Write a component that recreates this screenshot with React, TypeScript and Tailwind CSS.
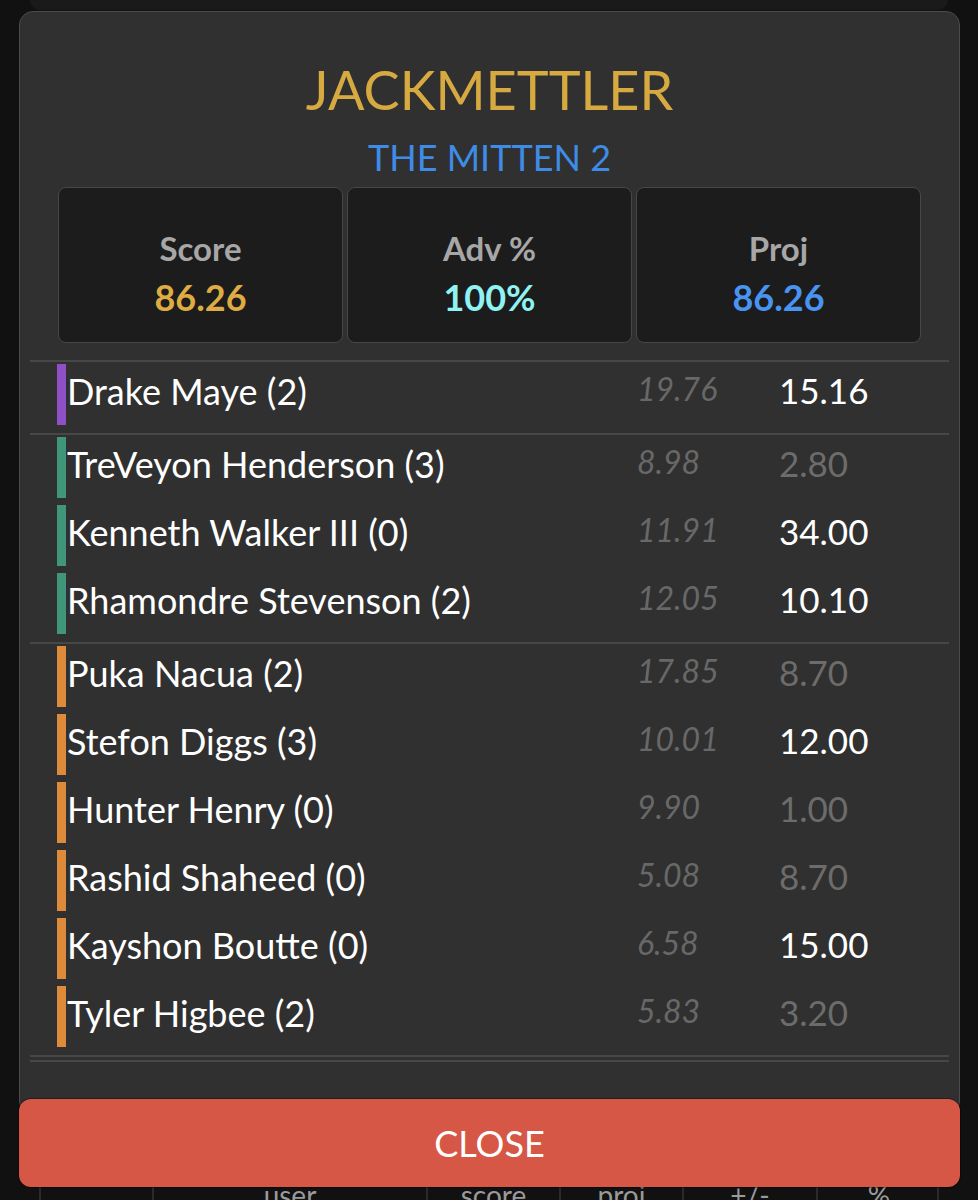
import type { ReactNode } from 'react';

type Player = { name: string; proj: string; score: string; live: boolean };
type Group = { color: string; players: Player[] };

const groups: Group[] = [
  {
    color: 'bg-[#8f4fc6]',
    players: [{ name: 'Drake Maye (2)', proj: '19.76', score: '15.16', live: true }],
  },
  {
    color: 'bg-[#3f967a]',
    players: [
      { name: 'TreVeyon Henderson (3)', proj: '8.98', score: '2.80', live: false },
      { name: 'Kenneth Walker III (0)', proj: '11.91', score: '34.00', live: true },
      { name: 'Rhamondre Stevenson (2)', proj: '12.05', score: '10.10', live: true },
    ],
  },
  {
    color: 'bg-[#de8a3b]',
    players: [
      { name: 'Puka Nacua (2)', proj: '17.85', score: '8.70', live: false },
      { name: 'Stefon Diggs (3)', proj: '10.01', score: '12.00', live: true },
      { name: 'Hunter Henry (0)', proj: '9.90', score: '1.00', live: false },
      { name: 'Rashid Shaheed (0)', proj: '5.08', score: '8.70', live: false },
      { name: 'Kayshon Boutte (0)', proj: '6.58', score: '15.00', live: true },
      { name: 'Tyler Higbee (2)', proj: '5.83', score: '3.20', live: false },
    ],
  },
];

function App() {
  return (
    <div className="relative h-[1200px] overflow-hidden bg-[#111111] font-[Lato,sans-serif]">
      {/* page behind the modal */}
      <div className="mx-[30px] h-[10px] rounded-b-[14px] bg-[#1a1a1a]" />
      <div className="h-[1171px]" />
      <div className="mx-[39px] grid h-[40px] grid-cols-[113px_274px_133px_123px_134px_122px] border-x-2 border-[#2a2a2a] text-[28px] leading-none text-[#9a9a9a]">
        <HeadCell />
        <HeadCell>user</HeadCell>
        <HeadCell>score</HeadCell>
        <HeadCell>proj</HeadCell>
        <HeadCell>+/-</HeadCell>
        <HeadCell last>%</HeadCell>
      </div>

      {/* modal */}
      <div className="absolute left-[19px] top-[11px] z-10 w-[941px]">
        <div className="rounded-[14px] border border-[#4b4b4b] bg-[#303030] px-[10px] pb-[52px] pt-[51px]">
          <h1 className="text-center text-[54px] leading-none text-[#d7a941]">JACKMETTLER</h1>
          <h2 className="mt-[22px] text-center text-[36px] leading-none text-[#3e8ce6]">THE MITTEN 2</h2>

          <div className="mt-[12px] grid grid-cols-3 gap-[4px] px-[28px]">
            <StatCard label="Score" value="86.26" valueColor="text-[#dfac44]" />
            <StatCard label="Adv %" value="100%" valueColor="text-[#90f2f2]" />
            <StatCard label="Proj" value="86.26" valueColor="text-[#4894f0]" />
          </div>

          <div className="mt-[17px] h-[2px] bg-[#474747]" />
          {groups.map((group, gi) => (
            <div key={gi}>
              <div className="flex flex-col gap-[7px] pb-[8px] pt-[2px]">
                {group.players.map((p) => (
                  <PlayerRow key={p.name} player={p} color={group.color} />
                ))}
              </div>
              <div className="h-[2px] bg-[#474747]" />
            </div>
          ))}
          <div className="mt-[3px] h-[2px] bg-[#474747]" />
        </div>

        <button className="relative -mt-[16px] flex h-[88px] w-full items-center justify-center rounded-[12px] bg-[#d65745] text-[36px] leading-none text-white shadow-[0_0_0_1px_rgba(0,0,0,0.35)]">
          CLOSE
        </button>
      </div>
    </div>
  );
}

function HeadCell({ children, last }: { children?: ReactNode; last?: boolean }) {
  return (
    <div className={last ? 'text-center' : 'border-r-2 border-[#2a2a2a] text-center'}>{children}</div>
  );
}

function StatCard({ label, value, valueColor }: { label: string; value: string; valueColor: string }) {
  return (
    <div className="h-[156px] rounded-[8px] border border-[#474747] bg-[#1c1c1c] pt-[44px] text-center">
      <p className="text-[33px] font-bold leading-none text-[#a7a7a7]">{label}</p>
      <p className={`mt-[14px] text-[36px] font-bold leading-none ${valueColor}`}>{value}</p>
    </div>
  );
}

function PlayerRow({ player, color }: { player: Player; color: string }) {
  return (
    <div className="flex h-[61px] pl-[27px]">
      <div className={`w-[9px] ${color}`} />
      <p className="flex-1 pl-[1px] pt-[9px] text-[36px] leading-none text-white">{player.name}</p>
      <p className="w-[142px] pt-[9px] text-[32px] italic leading-none text-[#686868]">{player.proj}</p>
      <p className={`w-[170px] pt-[9px] text-[35px] leading-none ${player.live ? 'text-white' : 'text-[#6c6c6c]'}`}>
        {player.score}
      </p>
    </div>
  );
}

export default App;
